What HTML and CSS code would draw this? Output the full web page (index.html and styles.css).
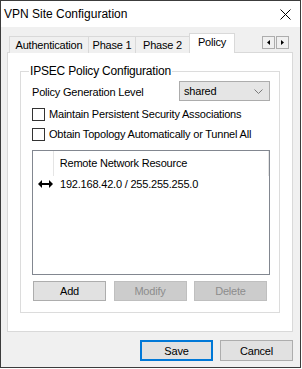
FILE: index.html
```html
<!DOCTYPE html>
<html lang="en">
<head>
<meta charset="UTF-8">
<title>VPN Site Configuration</title>
<link rel="stylesheet" href="styles.css">
</head>
<body>

<div class="window">
    <div class="titlebar">
        <span class="title">VPN Site Configuration</span>
        <svg class="close" width="11" height="11" viewBox="0 0 11 11">
            <path d="M0.5 0.5 L10.5 10.5 M10.5 0.5 L0.5 10.5" stroke="#000" stroke-width="1" fill="none"/>
        </svg>
    </div>

    <div class="content">
        <div class="tabbar">
            <div class="tabs">
                <div class="tab tab-auth">Authentication</div>
                <div class="tab tab-p1">Phase 1</div>
                <div class="tab tab-p2">Phase 2</div>
                <div class="tab tab-policy active">Policy</div>
            </div>
            <div class="scroller">
                <span class="arrow">
                    <svg width="3" height="5" viewBox="0 0 3 5"><path d="M3 0 L3 5 L0 2.5 Z" fill="#000"/></svg>
                </span>
                <span class="arrow">
                    <svg width="3" height="5" viewBox="0 0 3 5"><path d="M0 0 L0 5 L3 2.5 Z" fill="#000"/></svg>
                </span>
            </div>
        </div>

        <div class="panel">
            <fieldset class="group">
                <legend>IPSEC Policy Configuration</legend>

                <div class="row-select">
                    <span class="label">Policy Generation Level</span>
                    <div class="select">
                        <span>shared</span>
                        <svg width="9" height="5" viewBox="0 0 9 5">
                            <path d="M0.5 0.5 L4.5 4.5 L8.5 0.5" stroke="#7a7a7a" stroke-width="1" fill="none"/>
                        </svg>
                    </div>
                </div>

                <label class="check">
                    <span class="box"></span>
                    <span>Maintain Persistent Security Associations</span>
                </label>
                <label class="check">
                    <span class="box"></span>
                    <span>Obtain Topology Automatically or Tunnel All</span>
                </label>

                <div class="listview">
                    <div class="lv-header">
                        <div class="col-icon"></div>
                        <div class="col-name">Remote Network Resource</div>
                        <div class="col-rest"></div>
                    </div>
                    <div class="lv-row">
                        <div class="col-icon">
                            <svg width="15" height="8" viewBox="0 0 15 8">
                                <path d="M3 4 L12 4" stroke="#000" stroke-width="2"/>
                                <path d="M0 4 L4 0 L4 8 Z" fill="#000"/>
                                <path d="M15 4 L11 0 L11 8 Z" fill="#000"/>
                            </svg>
                        </div>
                        <div class="col-name">192.168.42.0 / 255.255.255.0</div>
                    </div>
                </div>

                <div class="list-buttons">
                    <button class="btn">Add</button>
                    <button class="btn" disabled>Modify</button>
                    <button class="btn" disabled>Delete</button>
                </div>
            </fieldset>
        </div>

        <div class="actions">
            <button class="btn btn-default">Save</button>
            <button class="btn">Cancel</button>
        </div>
    </div>
</div>

</body>
</html>
```

FILE: styles.css
```css
body {
    margin: 0;
    background: #fff;
    font-family: "Liberation Sans", Arial, sans-serif;
    font-size: 11px;
    letter-spacing: -0.2px;
    color: #000;
}

.window {
    width: 301px;
    height: 368px;
    box-sizing: border-box;
    border: 1px solid #3c3c3c;
    display: flex;
    flex-direction: column;
}

/* Title bar */
.titlebar {
    height: 26px;
    background: #fff;
    display: flex;
    align-items: center;
    justify-content: space-between;
    padding: 0 9px 0 3px;
}
.title {
    font-size: 12px;
    letter-spacing: 0;
}

.content {
    flex: 1;
    background: #f0f0f0;
    padding: 6px 7px 0 6px;
}

/* Tabs */
.tabbar {
    display: flex;
    justify-content: space-between;
    align-items: flex-start;
    height: 20px;
    position: relative;
    z-index: 1;
}
.tabs {
    display: flex;
    align-items: flex-end;
    height: 20px;
    padding-left: 2px;
}
.tab {
    box-sizing: border-box;
    height: 17px;
    border: 1px solid #d9d9d9;
    border-bottom: none;
    margin-left: -1px;
    text-align: center;
    line-height: 16px;
    background: #f0f0f0;
}
.tab:first-child {
    margin-left: 0;
}
.tab-auth { width: 80px; }
.tab-p1 { width: 48px; }
.tab-p2 { width: 55px; }
.tab-policy { width: 46px; }
.tab.active {
    height: 20px;
    background: #fff;
    line-height: 17px;
}

.scroller {
    display: flex;
    margin-top: 3px;
    margin-right: 4px;
}
.arrow {
    width: 13px;
    height: 13px;
    box-sizing: border-box;
    border: 1px solid #adadad;
    background: #f0f0f0;
    display: flex;
    align-items: center;
    justify-content: center;
}
.arrow + .arrow {
    margin-left: 1px;
}

/* Panel */
.panel {
    box-sizing: border-box;
    height: 280px;
    margin-top: -1px;
    background: #fff;
    border: 1px solid #d9d9d9;
    padding: 11px 12px 0 12px;
}

.group {
    margin: 0;
    padding: 2px 9px 11px 11px;
    border: 1px solid #dcdcdc;
    min-width: 0;
}
.group legend {
    padding: 0 1px;
    margin-left: -3px;
    line-height: 15px;
    font-size: 12px;
}

.row-select {
    display: flex;
    justify-content: space-between;
    align-items: center;
    height: 20px;
}
.label {
    padding-top: 2px;
}
.select {
    box-sizing: border-box;
    width: 91px;
    height: 20px;
    background: #e5e5e5;
    border: 1px solid #acacac;
    display: flex;
    align-items: center;
    justify-content: space-between;
    padding: 0 6px 0 4px;
}

.check {
    display: flex;
    align-items: center;
    height: 14px;
    margin-top: 6px;
}
.check .box {
    width: 13px;
    height: 13px;
    box-sizing: border-box;
    border: 1px solid #333;
    background: #fff;
    margin-right: 4px;
}

/* List view */
.listview {
    box-sizing: border-box;
    height: 125px;
    margin-top: 9px;
    border: 1px solid #828790;
    background: #fff;
}
.lv-header {
    display: flex;
    height: 25px;
    align-items: stretch;
}
.lv-header .col-icon {
    width: 20px;
    border-right: 1px solid #e5e5e5;
}
.lv-header .col-name {
    width: 211px;
    border-right: 1px solid #e5e5e5;
    padding-left: 6px;
    line-height: 25px;
}
.lv-row {
    display: flex;
    align-items: center;
    height: 16px;
}
.lv-row .col-icon {
    box-sizing: border-box;
    width: 21px;
    padding-left: 5px;
    display: flex;
    align-items: center;
}
.lv-row .col-name {
    padding-left: 6px;
}

/* Buttons */
.btn {
    box-sizing: border-box;
    width: 73px;
    height: 20px;
    padding: 0;
    background: #e1e1e1;
    border: 1px solid #adadad;
    font-family: inherit;
    font-size: 11px;
    letter-spacing: inherit;
    color: #000;
}
.btn:disabled {
    background: #cccccc;
    border-color: #bfbfbf;
    color: #8c8c8c;
}
.btn-default {
    border: 2px solid #0078d7;
}

.list-buttons {
    display: flex;
    justify-content: space-between;
    width: 234px;
    margin: 6px 0 0 1px;
}

.actions {
    display: flex;
    justify-content: flex-end;
    gap: 7px;
    margin-top: 8px;
}
.actions .btn {
    height: 21px;
}
```
